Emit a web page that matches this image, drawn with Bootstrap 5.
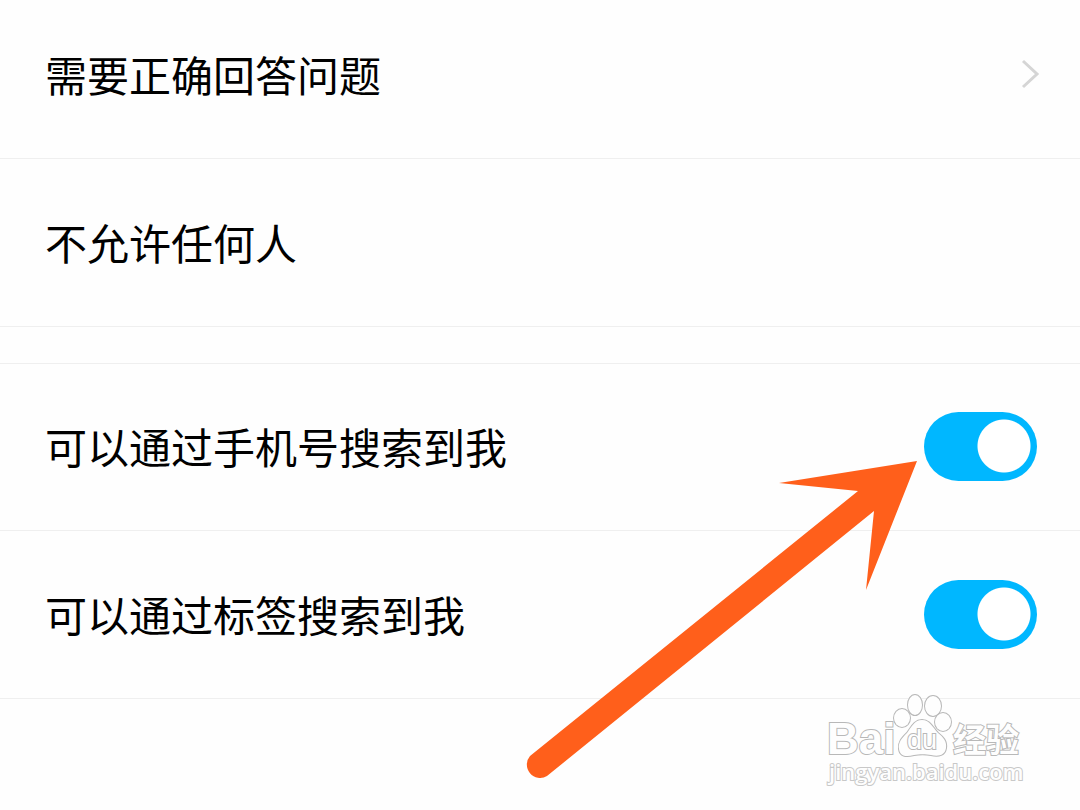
<!DOCTYPE html>
<html lang="zh-CN">
<head>
<meta charset="utf-8">
<meta name="viewport" content="width=device-width, initial-scale=1">
<title>加好友设置</title>
<link href="https://cdn.jsdelivr.net/npm/bootstrap@5.3.0/dist/css/bootstrap.min.css" rel="stylesheet">
<style>
  body { background: #fefefe; font-family: "Noto Sans CJK SC", sans-serif; color: #000; }
  .settings { min-height: 100vh; overflow: hidden; }
  .setting-item {
    padding: 48px 43px 50px 45px; border: 0; border-bottom: 1px solid #efefef; border-radius: 0;
    background: transparent; color: #000; font-size: 42px; line-height: 69px;
  }
  .list-group-flush > .setting-item, .list-group-flush > .setting-item:last-child { border-width: 0 0 1px; }
  .setting-item:hover, .setting-item:focus { color: #000; background: transparent; }
  .setting-item.top-item { padding-top: 39px; }
  .setting-item.has-toggle { padding-top: 49px; padding-bottom: 49px; line-height: 67px; }
  .setting-item.after-gap { padding-top: 48px; }
  .group-gap { height: 37px; border-bottom: 1px solid #efefef; }
  .setting-item .toggle, .setting-item .toggle:checked {
    width: 113px; height: 69px; margin: 0; border: 0; border-radius: 35px; flex: none; float: none;
    background: #d8d8d8 radial-gradient(circle at 33px 34px, #fff 26px, transparent 27px);
  }
  .setting-item .toggle:checked {
    background: #00b7ff radial-gradient(circle at 80px 34px, #fff 26px, transparent 27px);
  }
  .setting-item label { padding-bottom: 2px; }
  .arrow { right: 160px; top: 455px; pointer-events: none; }
  .watermark { right: 50px; top: 690px; }
  .watermark text, .watermark .paw { fill: #fefefe; stroke: #b8b8b8; stroke-width: 2px; paint-order: stroke; }
  .watermark .brand { font: 700 44px "Liberation Sans", sans-serif; }
  .watermark .du { font: 400 27px "Liberation Sans", sans-serif; }
  .watermark .cn { font: 700 33px "Noto Sans CJK SC", sans-serif; }
  .watermark .site { font: 600 22px "Open Sans", sans-serif; stroke: #c8c8c8; }
</style>
</head>
<body>
<main class="settings position-relative">
  <div class="list-group list-group-flush">
    <a href="#" class="list-group-item setting-item top-item d-flex align-items-center justify-content-between">
      <span>需要正确回答问题</span>
      <svg width="18" height="30" viewBox="0 0 18 30" fill="none" stroke="#d5d5d5" stroke-width="3" overflow="visible" aria-hidden="true"><path d="M4 2 18 15 4 28"/></svg>
    </a>
    <a href="#" class="list-group-item setting-item"><span>不允许任何人</span></a>
    <div class="group-gap"></div>
    <div class="list-group-item setting-item has-toggle after-gap d-flex align-items-center justify-content-between">
      <label for="byPhone">可以通过手机号搜索到我</label>
      <input class="form-check-input toggle" type="checkbox" role="switch" id="byPhone" checked>
    </div>
    <div class="list-group-item setting-item has-toggle d-flex align-items-center justify-content-between">
      <label for="byTag">可以通过标签搜索到我</label>
      <input class="form-check-input toggle" type="checkbox" role="switch" id="byTag" checked>
    </div>
  </div>

  <svg class="arrow position-absolute" width="400" height="330" viewBox="520 455 400 330" aria-hidden="true">
    <path fill="#ff5f1b" d="M917 461 779 483 858 491 530 756A13.300 13.300 0 0 0 547 776L874 511 866 590Z"/>
  </svg>

  <svg class="watermark position-absolute" width="210" height="104" viewBox="820 690 210 104" role="img" aria-label="Baidu">
    <text class="brand" x="827" y="754">Bai</text>
    <g class="paw">
      <ellipse cx="902" cy="718" rx="8" ry="9"/>
      <ellipse cx="915" cy="705" rx="7" ry="10"/>
      <ellipse cx="933" cy="706" rx="8" ry="10"/>
      <ellipse cx="943" cy="722" rx="8" ry="9"/>
      <path d="M922 720C914 720 911 728 907 733C902 738 898 742 899 749C900 757 907 757 914 755C919 754 926 754 931 755C939 757 945 755 946 748C947 741 943 737 938 733C933 728 930 720 922 720Z"/>
    </g>
    <text class="du" x="907" y="749">du</text>
    <text class="cn" x="953" y="752">经验</text>
    <text class="site" x="829" y="780">jingyan.baidu.com</text>
  </svg>
</main>
<script src="https://cdn.jsdelivr.net/npm/bootstrap@5.3.0/dist/js/bootstrap.bundle.min.js"></script>
</body>
</html>
